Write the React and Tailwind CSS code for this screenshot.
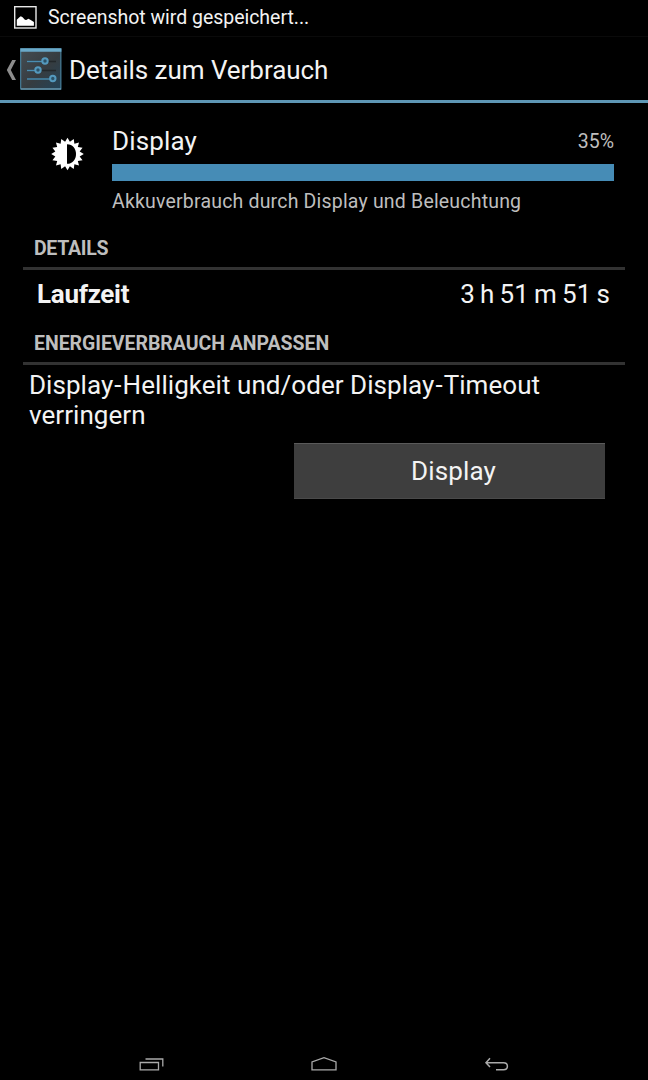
const RAYS = 16

const burst = Array.from({ length: RAYS * 2 }, (_, i) => {
  const r = i % 2 === 0 ? 16.3 : 12.4
  const a = (i * Math.PI) / RAYS - Math.PI / 2
  return `${(17.5 + r * Math.cos(a)).toFixed(2)},${(17 + r * Math.sin(a)).toFixed(2)}`
}).join(' ')

function ScreenshotIcon() {
  return (
    <svg className="block h-6 w-6" viewBox="0 0 24 24" fill="none">
      <rect x="1.7" y="1.7" width="21.3" height="21.3" stroke="#e8e8e8" strokeWidth="1.4" />
      <path d="M3.8 20.8v-6l2.6-2.6 1.4-1 1.8 1 2.3 2.6 1.3.3 2.2-1.4 2.3 1.3 3.2 2.1v3.7z" fill="#fff" />
    </svg>
  )
}

function SettingsIcon() {
  return (
    <svg className="block h-[42px] w-[42px]" viewBox="0 0 42 42" fill="none">
      <defs>
        <linearGradient id="tile" x1="0" y1="0" x2="1" y2="1">
          <stop offset="0" stopColor="#454d52" />
          <stop offset="0.55" stopColor="#363c40" />
          <stop offset="1" stopColor="#234357" />
        </linearGradient>
      </defs>
      <rect x="0.7" y="0.7" width="40.2" height="40.4" fill="url(#tile)" stroke="#4f8fb0" />
      <path d="M0.4 0.4h41v3.3h-41z" fill="#6aa9c8" />
      <path d="M1 41h40" stroke="#78a6bc" />
      <path d="M7 13.5h29M7 22.5h29M7 31h29" stroke="#23282b" strokeWidth="1.6" />
      <path d="M7 13.5h16M7 22.5h9M7 31h23" stroke="#4a8db1" strokeWidth="1.4" />
      <g fill="#2b5268" stroke="#5499bd" strokeWidth="2">
        <circle cx="25" cy="13" r="2.7" />
        <circle cx="18" cy="22" r="2.7" />
        <circle cx="32.8" cy="30.5" r="2.7" />
      </g>
    </svg>
  )
}

function BrightnessIcon() {
  return (
    <svg className="block h-[34px] w-[34px]" viewBox="0 0 34 34">
      <polygon points={burst} fill="#fff" />
      <path d="M17 7.2c12 0 12 19.6 0 19.6z" fill="#000" />
    </svg>
  )
}

function SectionTitle({ children }) {
  return (
    <h2 className="h-[33px] border-b-[3px] border-[#323232] pt-px pl-[11px] text-[19.5px] leading-[22px] font-bold tracking-[-0.04px] text-[#bebebe]">
      {children}
    </h2>
  )
}

export default function App() {
  return (
    <div className="flex h-[1080px] w-[648px] flex-col overflow-hidden bg-black font-['Roboto',sans-serif] text-[#f3f3f3]">
      <div className="flex h-9 items-center gap-[11px] pb-px pl-[13px]">
        <div className="pb-[2px]">
          <ScreenshotIcon />
        </div>
        <span className="text-[19.5px] leading-6 tracking-[-0.03px]">Screenshot wird gespeichert...</span>
      </div>

      <header className="flex h-[67px] items-center border-t border-b-[3px] border-t-[#0a0a0a] border-b-[#5e97b5] pt-[3px]">
        <svg className="ml-[6px] block h-5 w-[10px]" viewBox="0 0 10 20">
          <path d="M6.2 0H10L4.8 10 10 20H6.2L.8 10z" fill="#8c8c8c" />
        </svg>
        <div className="ml-[4px] pb-[3px]">
          <SettingsIcon />
        </div>
        <h1 className="ml-[7px] text-[26px] leading-8 tracking-[-0.05px]">Details zum Verbrauch</h1>
      </header>

      <main className="flex-1 pr-[23px] pl-[23px]">
        <section className="flex h-[134px] pr-[11px]">
          <div className="w-[89px] pt-[34px] pl-[27px]">
            <BrightnessIcon />
          </div>
          <div className="flex-1 pt-[22px]">
            <div className="flex h-[39px] justify-between">
              <span className="text-[26px] leading-[32px] tracking-[0.15px]">Display</span>
              <span className="pt-[2px] text-[19.5px] leading-[30px] text-[#bebebe]">35%</span>
            </div>
            <div className="h-[17px] bg-[#468cb6]" />
            <p className="mt-[9px] text-[19.5px] leading-6 tracking-[0.19px] text-[#bebebe]">
              Akkuverbrauch durch Display und Beleuchtung
            </p>
          </div>
        </section>

        <SectionTitle>
          <span className="tracking-[-0.3px]">DETAILS</span>
        </SectionTitle>
        <div className="flex h-[62px] justify-between pt-[8px] pr-[15px] pl-[14px] text-[26px] leading-8">
          <span className="font-bold tracking-[-0.3px]">Laufzeit</span>
          <span className="[word-spacing:-1.2px]">3 h 51 m 51 s</span>
        </div>

        <SectionTitle>ENERGIEVERBRAUCH ANPASSEN</SectionTitle>
        <p className="pt-[5px] pl-[6px] text-[26px] leading-[30px] tracking-[0.05px]">
          Display<span className="px-px">-</span>Helligkeit und/oder Display<span className="px-px">-</span>Timeout
          <br />
          verringern
        </p>
        <div className="flex justify-end pt-[13px] pr-5">
          <button className="h-14 w-[311px] border-t border-b border-t-[#5a5a5a] border-b-[#4a4a4a] bg-[#3e3e3e] pl-[8px] text-[26px] leading-8 tracking-[0.15px]">
            Display
          </button>
        </div>
      </main>

      <nav className="flex h-8 items-center text-[#aaa]">
        <svg className="ml-[139px] block h-4 w-[26px]" viewBox="0 0 26 16" fill="none" stroke="currentColor" strokeWidth="1.3">
          <path d="M1.2 6.5h18.3v7.3H1.2zM6.5 3h17.3v7.5" />
        </svg>
        <svg className="ml-[145px] block h-4 w-7" viewBox="0 0 28 16" fill="none" stroke="currentColor" strokeWidth="1.3">
          <path d="M2 13.8V6L14 1.7 26 6v7.8z" />
        </svg>
        <svg className="ml-[146px] block h-4 w-[26px]" viewBox="0 0 26 16" fill="none" stroke="currentColor" strokeWidth="1.5">
          <path d="M6 2.2 2 6.7l4 4.3M2 6.7h17.5c5.2 0 5.2 7 0 7H12" />
        </svg>
      </nav>
    </div>
  )
}
